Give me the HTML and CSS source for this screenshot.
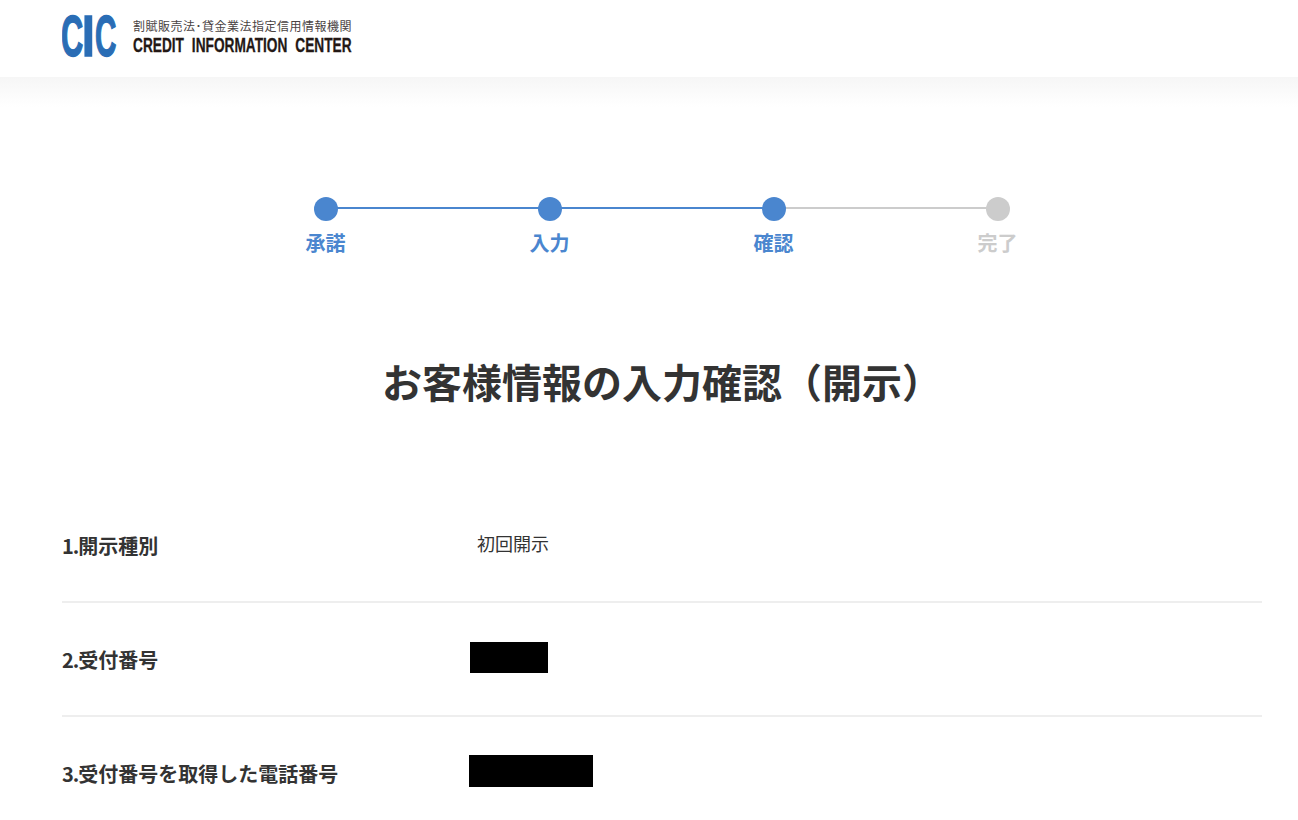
FILE: index.html
```html
<!DOCTYPE html>
<html lang="ja">
<head>
    <meta charset="UTF-8">
    <meta name="viewport" content="width=device-width, initial-scale=1.0">
    <title>お客様情報の入力確認（開示）</title>
    <link rel="stylesheet" href="styles.css">
</head>
<body>

    <div class="header">
        <svg class="logo" width="300" height="74" viewBox="0 0 300 74">
            <text class="logo-mark" transform="translate(-1,53) scale(.54,1)">C</text>
            <text class="logo-mark" transform="translate(20,53) scale(.8,1)">I</text>
            <text class="logo-mark" transform="translate(33,53) scale(.52,1)">C</text>
            <text class="logo-ja" x="71" y="28">割賦販売法･貸金業法指定信用情報機関</text>
            <text class="logo-en" transform="translate(71,49) scale(.685,1)">CREDIT INFORMATION CENTER</text>
        </svg>
    </div>
    <div class="header-shade"></div>

    <div class="steps">
        <div class="step done">
            <span class="dot"></span>
            <span class="step-name">承諾</span>
        </div>
        <div class="step done">
            <span class="dot"></span>
            <span class="step-name">入力</span>
        </div>
        <div class="step done">
            <span class="dot"></span>
            <span class="step-name">確認</span>
        </div>
        <div class="step">
            <span class="dot"></span>
            <span class="step-name">完了</span>
        </div>
    </div>

    <h1 class="title">お客様情報の入力確認（開示）</h1>

    <div class="rows">
        <div class="row">
            <div class="row-label"><span class="num">1.</span>開示種別</div>
            <div class="row-value">初回開示</div>
        </div>
        <div class="row">
            <div class="row-label"><span class="num">2.</span>受付番号</div>
            <div class="row-value"><span class="redact redact-short"></span></div>
        </div>
        <div class="row">
            <div class="row-label"><span class="num">3.</span>受付番号を取得した電話番号</div>
            <div class="row-value"><span class="redact redact-long"></span></div>
        </div>
    </div>

</body>
</html>
```

FILE: styles.css
```css
body {
    font-family: "Noto Sans CJK JP", "Noto Sans", sans-serif;
    margin: 0;
    padding: 0;
    background-color: #ffffff;
    color: #333333;
    height: 820px;
    overflow: hidden;
}
.header {
    background-color: #ffffff;
    height: 77px;
    padding-left: 62px;
    display: flex;
    align-items: flex-start;
}
.logo {
    display: block;
    margin-top: 3px;
}
.logo-mark {
    font-family: "Liberation Sans", sans-serif;
    font-weight: bold;
    font-size: 57px;
    fill: #2a6db5;
    stroke: #2a6db5;
    stroke-width: 1.5px;
}
.logo-ja {
    font-size: 12px;
    letter-spacing: .5px;
    fill: #4a4343;
}
.logo-en {
    font-family: "Liberation Sans", sans-serif;
    font-weight: bold;
    font-size: 20px;
    word-spacing: 6px;
    fill: #231815;
    stroke: #231815;
    stroke-width: .3px;
}
.header-shade {
    height: 30px;
    background: linear-gradient(#f6f6f6, #ffffff);
}

/* steps */
.steps {
    display: flex;
    margin: 90px 0 0 214px;
}
.step {
    width: 224px;
    position: relative;
    display: flex;
    flex-direction: column;
    align-items: center;
    color: #cccccc;
}
.step::before {
    content: "";
    position: absolute;
    top: 10px;
    right: 112px;
    width: 224px;
    height: 2px;
    background: #cccccc;
}
.step:first-child::before {
    display: none;
}
.step.done {
    color: #4a86cf;
}
.step.done::before {
    background: #4a86cf;
}
.dot {
    width: 24px;
    height: 24px;
    border-radius: 50%;
    background: #cccccc;
    position: relative;
    z-index: 1;
}
.step.done .dot {
    background: #4a86cf;
}
.step-name {
    font-size: 20px;
    font-weight: bold;
    line-height: 26px;
    margin-top: 9px;
    padding-right: 1px;
}

/* title */
.title {
    font-size: 40px;
    font-weight: bold;
    line-height: 56px;
    text-align: center;
    margin: 97px 0 0;
    padding-left: 26px;
}

/* confirm rows */
.rows {
    margin: 80px 36px 0 62px;
}
.row {
    display: flex;
    align-items: center;
    height: 112px;
    border-bottom: 2px solid #eeeeee;
}
.row:last-child {
    border-bottom: 0;
}
.row-label {
    width: 415px;
    font-size: 20px;
    font-weight: bold;
    line-height: 30px;
    padding-top: 2px;
}
.num {
    letter-spacing: -1px;
}
.row-value {
    font-size: 18px;
    line-height: 26px;
    padding-bottom: 4px;
}
.redact {
    display: block;
    background: #000000;
}
.redact-short {
    width: 78px;
    height: 31px;
    margin-left: -7px;
}
.redact-long {
    width: 124px;
    height: 32px;
    margin-left: -8px;
}
```
